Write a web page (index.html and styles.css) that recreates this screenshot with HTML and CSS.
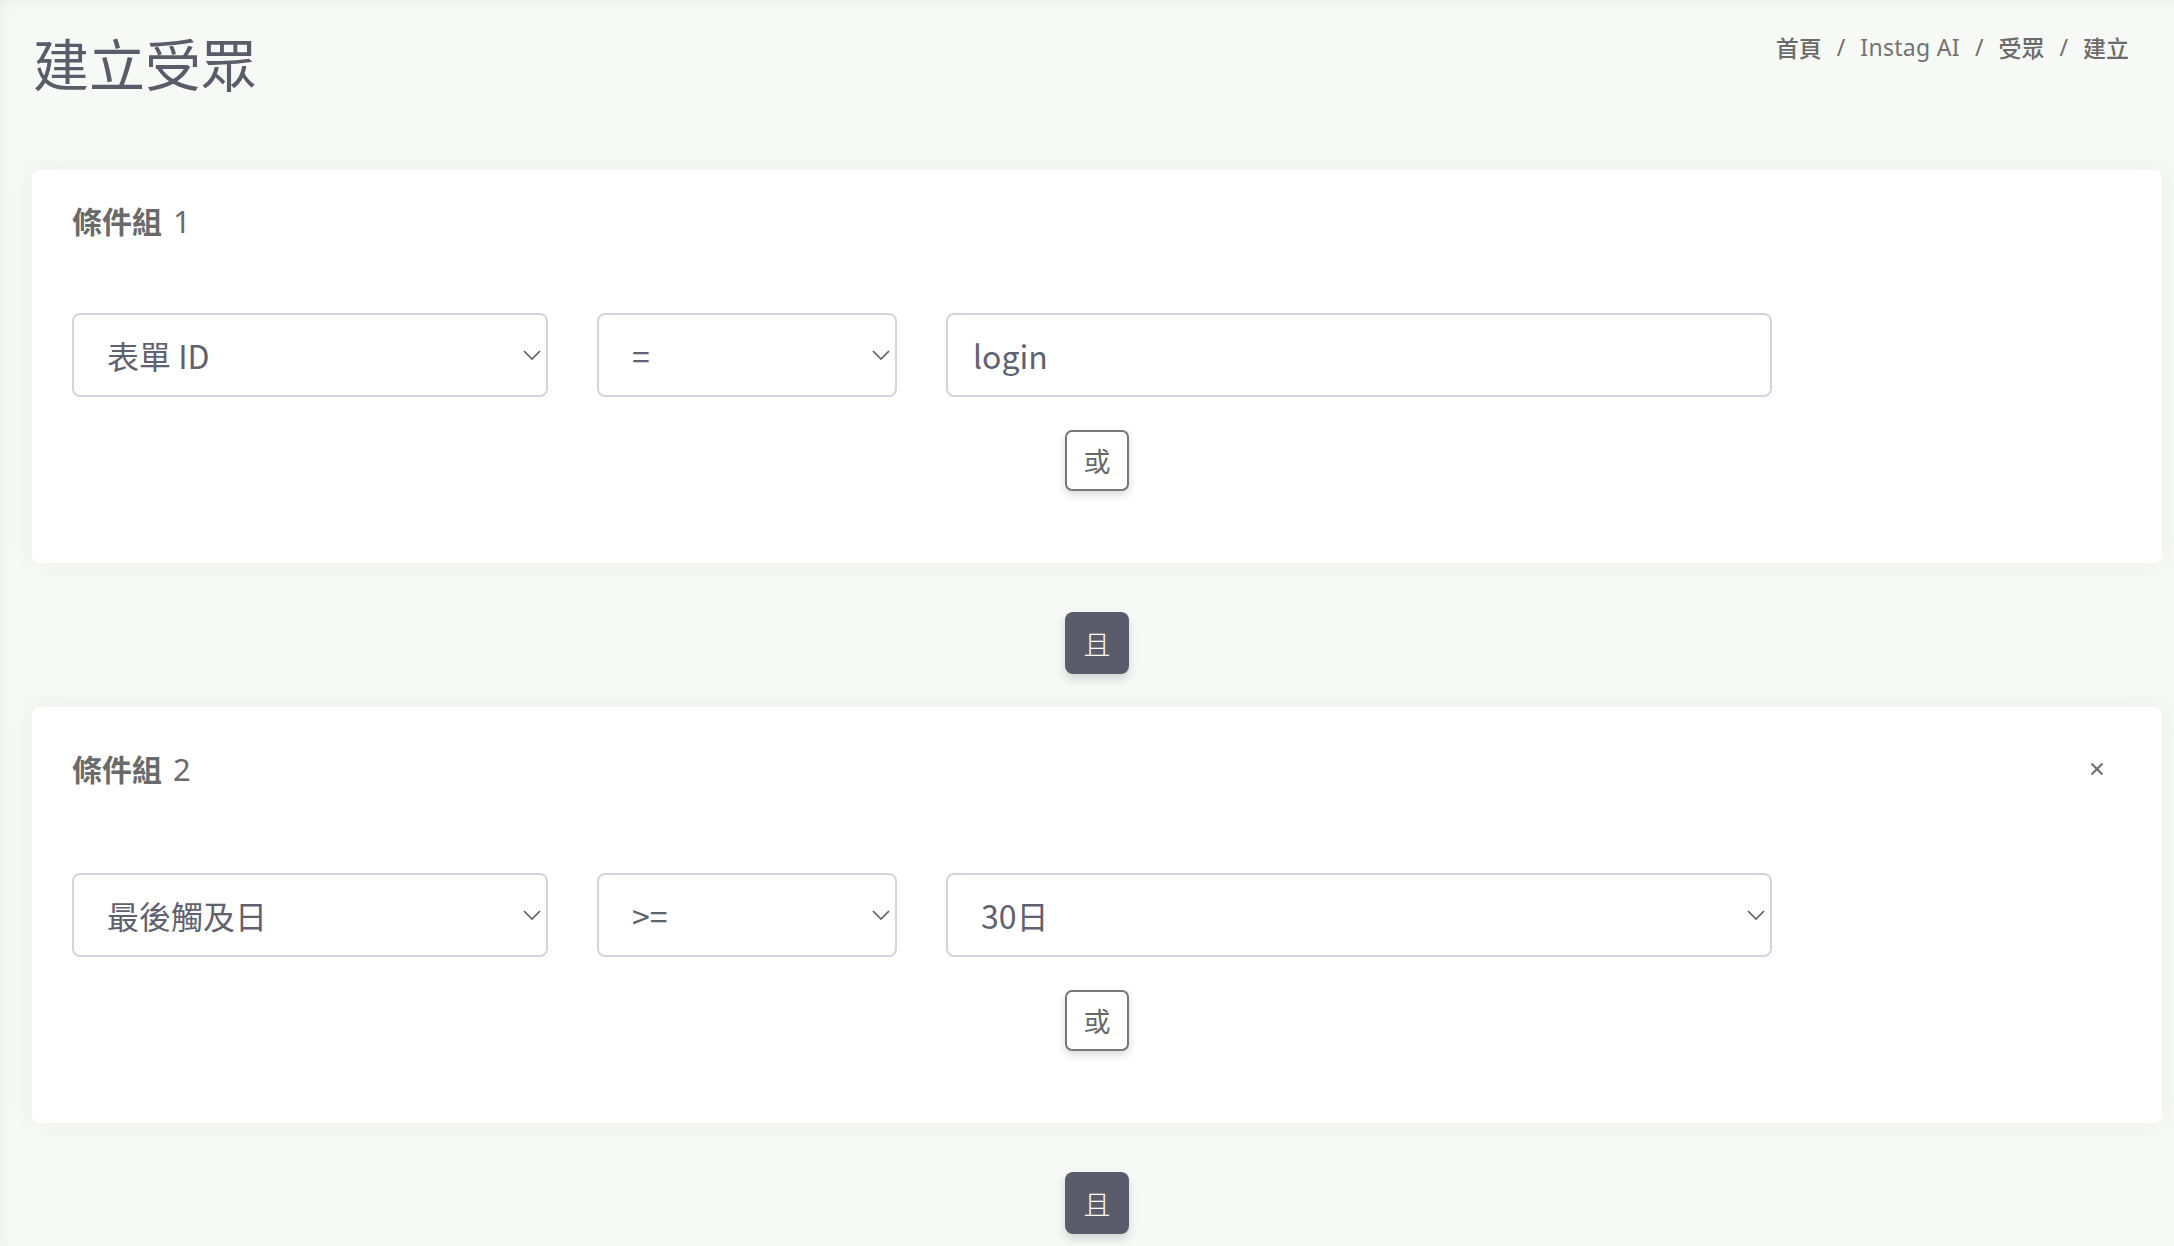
FILE: index.html
```html
<!DOCTYPE html>
<html lang="zh-Hant">
<head>
<meta charset="utf-8">
<title>建立受眾</title>
<link rel="stylesheet" href="styles.css">
</head>
<body>
<div class="page">
  <header class="page-header">
    <h1 class="page-title">建立受眾</h1>
    <nav class="breadcrumb">
      <span class="crumb">首頁</span><span class="sep">/</span><span class="crumb crumb-latin">Instag AI</span><span class="sep">/</span><span class="crumb">受眾</span><span class="sep">/</span><span class="crumb">建立</span>
    </nav>
  </header>

  <section class="card">
    <div class="card-head">
      <h2 class="card-title">條件組<span class="card-num">1</span></h2>
    </div>
    <div class="cond-row">
      <div class="field select"><span class="field-text">表單 ID</span><svg class="chev" width="18" height="10" viewBox="0 0 18 10"><polyline points="1,1 9,9 17,1" fill="none" stroke="#5f6170" stroke-width="1.7"/></svg></div>
      <div class="field select"><span class="field-text">=</span><svg class="chev" width="18" height="10" viewBox="0 0 18 10"><polyline points="1,1 9,9 17,1" fill="none" stroke="#5f6170" stroke-width="1.7"/></svg></div>
      <div class="field input"><span class="field-text">login</span></div>
    </div>
    <div class="or-wrap"><button class="btn-or">或</button></div>
  </section>

  <div class="and-wrap"><button class="btn-and">且</button></div>

  <section class="card">
    <div class="card-head card-head-close">
      <h2 class="card-title">條件組<span class="card-num">2</span></h2>
      <button class="btn-close" aria-label="close"><svg width="14" height="14" viewBox="0 0 14 14"><line x1="1.5" y1="1.5" x2="12.5" y2="12.5" stroke="#707070" stroke-width="2.2"/><line x1="12.5" y1="1.5" x2="1.5" y2="12.5" stroke="#707070" stroke-width="2.2"/></svg></button>
    </div>
    <div class="cond-row">
      <div class="field select"><span class="field-text">最後觸及日</span><svg class="chev" width="18" height="10" viewBox="0 0 18 10"><polyline points="1,1 9,9 17,1" fill="none" stroke="#5f6170" stroke-width="1.7"/></svg></div>
      <div class="field select"><span class="field-text">&gt;=</span><svg class="chev" width="18" height="10" viewBox="0 0 18 10"><polyline points="1,1 9,9 17,1" fill="none" stroke="#5f6170" stroke-width="1.7"/></svg></div>
      <div class="field select"><span class="field-text">30日</span><svg class="chev" width="18" height="10" viewBox="0 0 18 10"><polyline points="1,1 9,9 17,1" fill="none" stroke="#5f6170" stroke-width="1.7"/></svg></div>
    </div>
    <div class="or-wrap"><button class="btn-or">或</button></div>
  </section>

  <div class="and-wrap and-last"><button class="btn-and">且</button></div>
</div>
</body>
</html>
```

FILE: styles.css
```css
html, body {
  margin: 0;
  height: 100%;
}

body {
  background: #f7f9f7;
  font-family: "Noto Sans", "Noto Sans CJK TC", sans-serif;
  overflow: hidden;
  box-shadow: inset 0 14px 18px -12px rgba(0, 0, 0, 0.04), inset 14px 0 18px -12px rgba(0, 0, 0, 0.04);
}

.page {
  padding: 28px 12px 0 32px;
}

.page-header {
  display: flex;
  justify-content: space-between;
  align-items: flex-start;
  height: 67px;
  margin-bottom: 75px;
  padding-right: 33px;
}

.page-title {
  margin: 0 0 0 1px;
  font-family: "Noto Sans CJK TC", sans-serif;
  font-size: 56px;
  line-height: 67px;
  font-weight: 400;
  color: #5b5c6a;
}

.breadcrumb {
  display: flex;
  align-items: center;
  margin-top: 4px;
  font-size: 23px;
  line-height: 30px;
  color: #6b6b6b;
}

.crumb {
  font-family: "Noto Sans CJK TC", sans-serif;
  font-weight: 500;
}

.crumb-latin {
  font-family: "Noto Sans", sans-serif;
  font-weight: 400;
  color: #737373;
  letter-spacing: 0.3px;
}

.sep {
  margin: 0 15px;
  color: #6d6d6d;
  font-family: "Noto Sans", sans-serif;
}

.card {
  background: #ffffff;
  border-radius: 8px;
  box-shadow: 0 0 26px rgba(0, 0, 0, 0.05);
  padding: 32px 40px 72px;
}

.card-head {
  display: flex;
  align-items: center;
  justify-content: space-between;
  height: 36px;
}

.card-head-close {
  height: 59px;
}

.card-title {
  margin: 0;
  display: flex;
  align-items: baseline;
  font-family: "Noto Sans CJK TC", sans-serif;
  font-size: 30px;
  line-height: 36px;
  font-weight: 700;
  color: #6a6a6a;
}

.card-num {
  font-family: "Noto Sans", sans-serif;
  font-size: 31px;
  font-weight: 400;
  margin-left: 11px;
}

.btn-close {
  width: 50px;
  height: 59px;
  border: none;
  background: none;
  padding: 0;
  display: flex;
  align-items: center;
  justify-content: center;
  cursor: pointer;
}

.cond-row {
  display: grid;
  grid-template-columns: 476px 300px 826px;
  column-gap: 49px;
  margin-top: 75px;
}

.field {
  box-sizing: border-box;
  height: 84px;
  border: 2px solid #d3d3e3;
  border-radius: 8px;
  display: flex;
  align-items: center;
  justify-content: space-between;
  font-family: "Noto Sans CJK TC", sans-serif;
  font-size: 32px;
  line-height: 40px;
  color: #5f6171;
  background: #fff;
}

.select {
  padding: 0 5px 0 33px;
}

.input {
  padding: 0 20px 0 25px;
}

.chev {
  flex: none;
}

.or-wrap {
  display: flex;
  justify-content: center;
  margin-top: 33px;
}

.btn-or {
  box-sizing: border-box;
  width: 64px;
  height: 61px;
  border: 2px solid #777777;
  border-radius: 7px;
  background: #ffffff;
  font-family: "Noto Sans CJK TC", sans-serif;
  font-size: 27px;
  color: #666666;
  box-shadow: 0 4px 8px rgba(0, 0, 0, 0.15);
  padding: 0;
  cursor: pointer;
}

.and-wrap {
  display: flex;
  justify-content: center;
  padding: 49px 0 33px;
}

.and-last {
  padding-bottom: 12px;
}

.btn-and {
  width: 64px;
  height: 62px;
  border: none;
  border-radius: 8px;
  background: #5b5c6b;
  font-family: "Noto Sans CJK TC", sans-serif;
  font-size: 27px;
  font-weight: 300;
  color: #ffffff;
  box-shadow: 0 5px 10px rgba(0, 0, 0, 0.15);
  padding: 0;
  cursor: pointer;
}
```
